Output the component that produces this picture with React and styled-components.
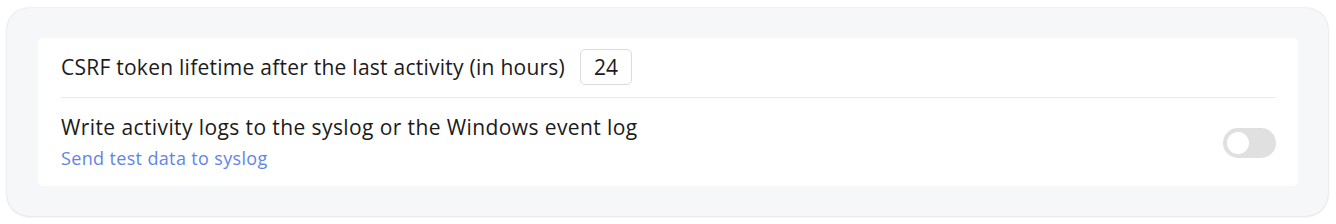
import React, { useState } from "react";
import styled, { createGlobalStyle } from "styled-components";

const GlobalStyle = createGlobalStyle`
  html, body {
    margin: 0;
    padding: 0;
    background: #ffffff;
  }
  body {
    font-family: "Open Sans", Lato, sans-serif;
    color: #1b1b1b;
  }
`;

const Page = styled.div`
  padding: 8px 8px 8px 7px;
`;

const Card = styled.section`
  background: #f6f7f9;
  border-radius: 22px;
  box-shadow: 0 0 2px rgba(0, 0, 0, 0.18), 0 1px 3px rgba(0, 0, 0, 0.06);
  padding: 30px 30px 30px 31px;
`;

const Panel = styled.div`
  background: #ffffff;
  border-radius: 5px;
  padding: 0 22px 0 23px;
`;

const Row = styled.div`
  display: flex;
  align-items: center;
  justify-content: space-between;
  padding: ${(p) => p.$pad};
  border-bottom: ${(p) => (p.$divider ? "1px solid #ebebeb" : "none")};
`;

const Field = styled.div`
  display: flex;
  align-items: center;
  gap: 15px;
`;

const Label = styled.span`
  font-size: 21px;
  line-height: 24px;
  letter-spacing: ${(p) => p.$spacing || "0.3px"};
`;

const NumberInput = styled.input`
  width: 52px;
  height: 36px;
  box-sizing: border-box;
  border: 1px solid #dcdcdc;
  border-radius: 5px;
  font-family: inherit;
  font-size: 21px;
  color: #1b1b1b;
  text-align: center;
  padding: 0;
  outline: none;
`;

const TextBlock = styled.div`
  display: flex;
  flex-direction: column;
  gap: 8px;
`;

const Link = styled.a`
  font-size: 18px;
  line-height: 22px;
  letter-spacing: 0.35px;
  color: #5f86e4;
  text-decoration: none;
  cursor: pointer;
`;

const Switch = styled.button`
  width: 53px;
  height: 30px;
  border: none;
  border-radius: 15px;
  background: ${(p) => (p.$on ? "#5f86e4" : "#e0e0e0")};
  padding: 0 4px;
  display: flex;
  align-items: center;
  justify-content: ${(p) => (p.$on ? "flex-end" : "flex-start")};
  cursor: pointer;
  margin-top: 2px;
`;

const Knob = styled.span`
  width: 22px;
  height: 22px;
  border-radius: 50%;
  background: #ffffff;
`;

export default function App() {
  const [hours, setHours] = useState("24");
  const [syslog, setSyslog] = useState(false);

  return (
    <>
      <GlobalStyle />
      <Page>
        <Card>
          <Panel>
            <Row $divider $pad="11px 0 12px">
              <Field>
                <Label $spacing="0.25px">
                  CSRF token lifetime after the last activity (in hours)
                </Label>
                <NumberInput
                  value={hours}
                  onChange={(e) => setHours(e.target.value)}
                />
              </Field>
            </Row>
            <Row $pad="17px 0 17px">
              <TextBlock>
                <Label $spacing="0.4px">
                  Write activity logs to the syslog or the Windows event log
                </Label>
                <Link>Send test data to syslog</Link>
              </TextBlock>
              <Switch $on={syslog} onClick={() => setSyslog(!syslog)}>
                <Knob />
              </Switch>
            </Row>
          </Panel>
        </Card>
      </Page>
    </>
  );
}
